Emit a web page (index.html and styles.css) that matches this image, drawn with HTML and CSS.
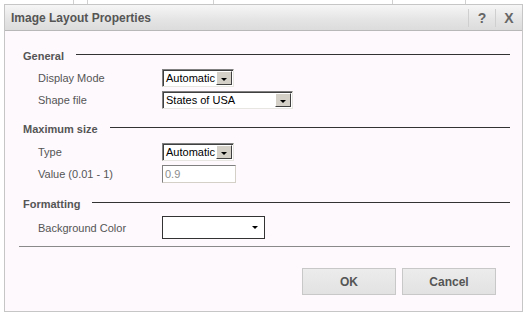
FILE: index.html
```html
<!DOCTYPE html>
<html lang="en">
<head>
    <meta charset="UTF-8">
    <title>Image Layout Properties</title>
    <link rel="stylesheet" href="styles.css">
</head>
<body>
    <!-- page behind the dialog -->
    <div class="backdrop">
        <span class="cell c1"></span>
        <span class="cell c2"></span>
        <span class="cell c3"></span>
        <span class="cell c4"></span>
        <span class="cell c5"></span>
    </div>

    <div class="dialog">
        <div class="titlebar">
            <span class="title">Image Layout Properties</span>
            <span class="tb-btn">?</span>
            <span class="tb-btn">X</span>
        </div>

        <div class="content">
            <div class="section">
                <div class="legend"><span>General</span><i class="rule"></i></div>
                <div class="row">
                    <label>Display Mode</label>
                    <div class="combo short"><span class="val">Automatic</span><span class="drop"></span></div>
                </div>
                <div class="row">
                    <label>Shape file</label>
                    <div class="combo long"><span class="val">States of USA</span><span class="drop"></span></div>
                </div>
            </div>

            <div class="section second">
                <div class="legend"><span>Maximum size</span><i class="rule"></i></div>
                <div class="row">
                    <label>Type</label>
                    <div class="combo short"><span class="val">Automatic</span><span class="drop"></span></div>
                </div>
                <div class="row">
                    <label>Value (0.01 - 1)</label>
                    <div class="textbox disabled">0.9</div>
                </div>
            </div>

            <div class="section third">
                <div class="legend"><span>Formatting</span><i class="rule"></i></div>
                <div class="row tall">
                    <label>Background Color</label>
                    <div class="colorpick"><span class="arrow"></span></div>
                </div>
            </div>

            <div class="bottom-rule"></div>

            <div class="buttons">
                <button type="button">OK</button>
                <button type="button">Cancel</button>
            </div>
        </div>
    </div>
</body>
</html>
```

FILE: styles.css
```css
/* General Reset */
* {
    margin: 0;
    padding: 0;
    box-sizing: border-box;
}

body {
    background: #ffffff;
    font-family: 'Liberation Sans', Arial, sans-serif;
    font-size: 11px;
    color: #555555;
}

/* strip of the page visible above the dialog */
.backdrop {
    height: 4px;
    position: relative;
}

.backdrop .cell {
    position: absolute;
    top: 0;
    height: 4px;
    border-left: 1px solid #d0d0d0;
}

.c1 { left: 73px; }
.c2 { left: 87px; }
.c3 { left: 213px; }
.c4 { left: 392px; }
.c5 { left: 465px; }

.dialog {
    margin-left: 4px;
    width: 519px;
    height: 308px;
    border: 1px solid #c6c6c6;
    background: #fdf9fd;
    display: flex;
    flex-direction: column;
}

.titlebar {
    height: 26px;
    display: flex;
    align-items: center;
    background: linear-gradient(#f6f6f6, #e4e4e4 60%, #dcdcdc);
    border-bottom: 1px solid #b8b8b8;
}

.title {
    flex: 1;
    padding-left: 6px;
    font-size: 12px;
    font-weight: bold;
    color: #555555;
}

.tb-btn {
    width: 27px;
    height: 18px;
    line-height: 18px;
    text-align: center;
    font-size: 14px;
    font-weight: bold;
    color: #666666;
    border-left: 1px solid #cfcfcf;
}

.content {
    flex: 1;
    padding: 16px 12px 0 13px;
}

.section.second {
    margin-top: 9px;
}

.section.second .legend {
    margin-bottom: 3px;
}

.section.third {
    margin-top: 10px;
}

.legend {
    height: 18px;
    margin-bottom: 2px;
    display: flex;
    align-items: center;
    font-weight: bold;
    color: #555555;
}

.legend span {
    padding-left: 5px;
}

.legend .rule {
    flex: 1;
    height: 1px;
    margin: -4px 0 0 12px;
    background: #333333;
}

.row {
    height: 22px;
    display: flex;
    align-items: center;
    padding-left: 20px;
}

.row.tall {
    height: 25px;
}

.row label {
    width: 124px;
}

/* old windows style dropdown */
.combo {
    height: 18px;
    display: flex;
    background: #ffffff;
    border-top: 1px solid #808080;
    border-left: 1px solid #808080;
    border-right: 1px solid #e8e6e0;
    border-bottom: 1px solid #e8e6e0;
    box-shadow: inset 1px 1px 0 #404040;
    color: #000000;
    font-size: 11px;
}

.combo.short {
    width: 72px;
}

.combo.long {
    width: 131px;
}

.combo .val {
    flex: 1;
    padding: 1px 0 0 3px;
    line-height: 15px;
    white-space: nowrap;
    overflow: hidden;
}

.combo .drop {
    width: 16px;
    margin: 1px 1px 1px 0;
    background: #d4d0c8;
    border-top: 1px solid #ffffff;
    border-left: 1px solid #ffffff;
    border-right: 1px solid #404040;
    border-bottom: 1px solid #404040;
    position: relative;
}

.combo .drop::after {
    content: "";
    position: absolute;
    left: 4px;
    top: 6px;
    border-left: 3px solid transparent;
    border-right: 3px solid transparent;
    border-top: 3px solid #000000;
}

.textbox {
    width: 74px;
    height: 18px;
    line-height: 16px;
    padding-left: 2px;
    font-size: 11px;
    background: #ffffff;
    border-top: 1px solid #808080;
    border-left: 1px solid #808080;
    border-right: 1px solid #d4d0c8;
    border-bottom: 1px solid #d4d0c8;
}

.textbox.disabled {
    color: #8c8c8c;
}

.colorpick {
    width: 103px;
    height: 23px;
    background: #ffffff;
    border: 1px solid #333333;
    position: relative;
}

.colorpick .arrow {
    position: absolute;
    right: 6px;
    top: 9px;
    border-left: 3px solid transparent;
    border-right: 3px solid transparent;
    border-top: 3px solid #000000;
}

.bottom-rule {
    height: 1px;
    margin: 6px 0 0 1px;
    background: #8a8a8a;
}

.buttons {
    display: flex;
    justify-content: flex-end;
    gap: 6px;
    padding: 21px 14px 0 0;
}

button {
    width: 94px;
    height: 27px;
    background: linear-gradient(#ececec, #e2e2e2);
    border: 1px solid #c8c8c8;
    font-family: 'Liberation Sans', Arial, sans-serif;
    font-size: 12px;
    font-weight: bold;
    color: #555555;
}
```
